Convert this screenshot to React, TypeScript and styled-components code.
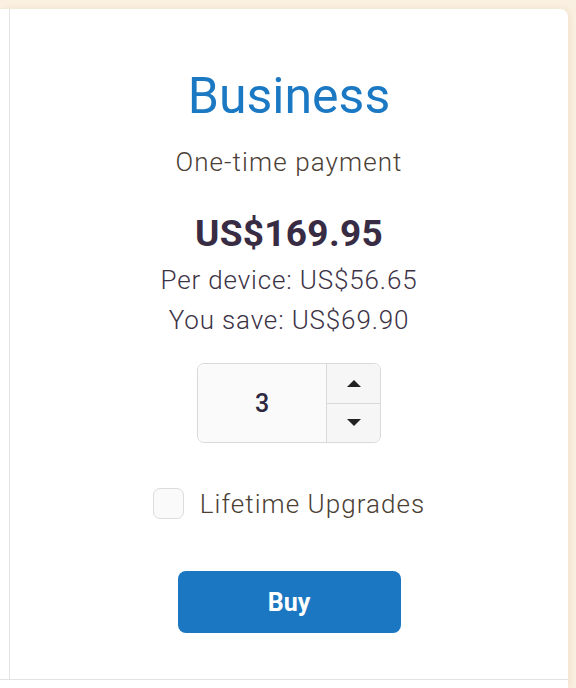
import React, { useState } from 'react';
import styled, { createGlobalStyle } from 'styled-components';

const GlobalStyle = createGlobalStyle`
  html, body {
    margin: 0;
    padding: 0;
    background: #faf0e2;
    font-family: Roboto, "Liberation Sans", sans-serif;
  }
  body {
    overflow: hidden;
  }
`;

const Page = styled.div`
  padding-top: 9px;
  padding-right: 8px;
  height: 688px;
  box-sizing: border-box;
`;

const Table = styled.div`
  height: 100%;
  display: flex;
  flex-direction: column;
  background: #fff;
  border-top-right-radius: 8px;
  box-shadow: 2px 0 6px rgba(226, 200, 160, 0.35);
`;

const Row = styled.div`
  display: flex;
  border-bottom: 1px solid #e3e3e3;
`;

const Stub = styled.div`
  width: 9px;
  border-right: 1px solid #e3e3e3;
`;

const Card = styled.div`
  flex: 1;
  display: flex;
  flex-direction: column;
  align-items: center;
  padding: 58px 0 46px;
  text-align: center;
`;

const Title = styled.h2`
  margin: 0;
  font-size: 50px;
  font-weight: 400;
  line-height: 58px;
  color: #1b78c3;
`;

const Subtitle = styled.div`
  margin-top: 22px;
  font-size: 26px;
  font-weight: 300;
  line-height: 30px;
  letter-spacing: 1.1px;
  color: #4b4034;
`;

const Price = styled.div`
  margin-top: 35px;
  font-size: 37px;
  font-weight: 700;
  line-height: 44px;
  letter-spacing: 0.3px;
  color: #382c45;
`;

const Details = styled.div`
  margin-top: 4px;
  font-size: 26px;
  font-weight: 300;
  line-height: 40px;
  letter-spacing: 0.85px;
  color: #3d3346;
`;

const Spinner = styled.div`
  margin-top: 23px;
  display: flex;
  width: 184px;
  height: 80px;
  box-sizing: border-box;
  border: 1px solid #d9d9d9;
  border-radius: 7px;
  overflow: hidden;
`;

const Count = styled.div`
  width: 128px;
  display: flex;
  align-items: center;
  justify-content: center;
  background: #fafafa;
  border-right: 1px solid #d9d9d9;
  font-size: 25px;
  font-weight: 500;
  color: #2c2840;
`;

const Steps = styled.div`
  flex: 1;
  display: flex;
  flex-direction: column;
  background: #f6f6f6;
`;

const Step = styled.button<{ $down?: boolean }>`
  flex: 1;
  display: flex;
  align-items: center;
  justify-content: center;
  padding: 0;
  border: 0;
  background: transparent;
  border-top: ${p => (p.$down ? '1px solid #d9d9d9' : '0')};
  cursor: pointer;
`;

const Option = styled.label`
  margin-top: 45px;
  height: 31px;
  display: flex;
  align-items: center;
  gap: 16px;
  font-size: 26px;
  font-weight: 300;
  letter-spacing: 1.05px;
  color: #4b4034;
  cursor: pointer;
`;

const Box = styled.span<{ $checked: boolean }>`
  width: 31px;
  height: 31px;
  box-sizing: border-box;
  border: 1px solid #dcdcdc;
  border-radius: 7px;
  background: ${p => (p.$checked ? '#1b77c2' : '#fafafa')};
`;

const BuyButton = styled.button`
  margin-top: 52px;
  width: 223px;
  height: 62px;
  border: 0;
  border-radius: 8px;
  background: #1b77c2;
  color: #fff;
  font-family: inherit;
  font-size: 25px;
  font-weight: 700;
  cursor: pointer;
`;

const Triangle = ({ up }: { up?: boolean }) => (
  <svg width="14" height="7" viewBox="0 0 14 7">
    <path d={up ? 'M0 7 L7 0 L14 7 Z' : 'M0 0 L14 0 L7 7 Z'} fill="#222" />
  </svg>
);

export default function App() {
  const [count, setCount] = useState(3);
  const [lifetime, setLifetime] = useState(false);

  return (
    <>
      <GlobalStyle />
      <Page>
        <Table>
          <Row>
            <Stub />
            <Card>
              <Title>Business</Title>
              <Subtitle>One-time payment</Subtitle>
              <Price>US$169.95</Price>
              <Details>
                <div>Per device: US$56.65</div>
                <div>You save: US$69.90</div>
              </Details>
              <Spinner>
                <Count>{count}</Count>
                <Steps>
                  <Step onClick={() => setCount(count + 1)}>
                    <Triangle up />
                  </Step>
                  <Step $down onClick={() => setCount(Math.max(1, count - 1))}>
                    <Triangle />
                  </Step>
                </Steps>
              </Spinner>
              <Option onClick={() => setLifetime(!lifetime)}>
                <Box $checked={lifetime} />
                Lifetime Upgrades
              </Option>
              <BuyButton>Buy</BuyButton>
            </Card>
          </Row>
        </Table>
      </Page>
    </>
  );
}
